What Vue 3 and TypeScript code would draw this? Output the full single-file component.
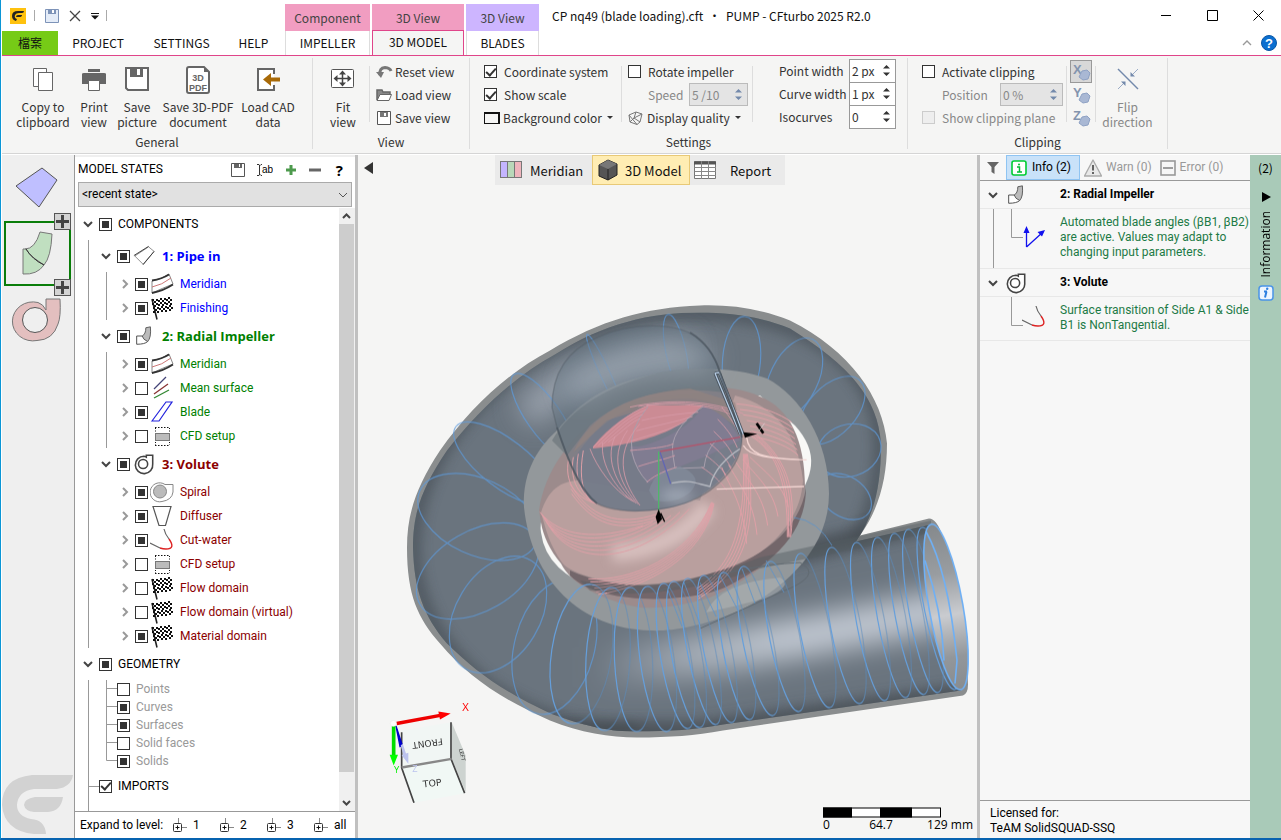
<script setup lang="ts">
import { ref } from 'vue'

type Check = 'on' | 'off' | 'part'
interface Leaf { label: string; icon: string; state: Check }
interface Part { label: string; icon: string; color: string; line: boolean; items: Leaf[] }

const flagCells = (): string => {
  let out = ''
  for (let r = 0; r < 7; r++) {
    for (let c = 0; c < 10; c++) {
      if ((r + c) % 2 === 0) {
        const y = 2 + r * 2 + (c < 3 ? 1 : c > 6 ? -1 : 0)
        out += `<rect x="${2 + c * 2 + (r > 3 ? 1 : 0)}" y="${y}" width="2" height="2" fill="#111"/>`
      }
    }
  }
  return out
}

const icons: Record<string, string> = {
  pipe: '<path d="M2 12L17 2L23 7L11 21Z" fill="#fff" stroke="#888"/><path d="M1 11.500L17 1.500M11 21.500L23 7" stroke="#333" fill="none"/>',
  meridian: '<path d="M2 9Q12 7 19 2L23 12Q13 16 2 21Z" fill="#fff" stroke="#888"/><path d="M2 8.500Q12 7 19 2.500M2 21Q13 19 23 12.500" stroke="#333" stroke-width="1.800" fill="none"/><path d="M2 15Q12 13 21 6" stroke="#c77" fill="none"/>',
  flag: '<path d="M2 2L22 1L23 14Q15 13 5 17Z" fill="#fff"/><path d="M2 3L7 23.500" stroke="#222" stroke-width="1.600"/>' + flagCells(),
  impeller: '<path d="M4 12H10L16 18Q13 21 4 21Z" fill="#fff" stroke="#444"/><path d="M14 3L19 2Q20 14 16 18Q11 16 10 12Q14 10 14 3Z" fill="#bbb" stroke="#555"/>',
  volute: '<path d="M14.500 4.500V2.500H21.500V12A9.500 9.500 0 1 1 12 3.500Q13.500 3.800 14.500 4.500Z" fill="#fff" stroke="#444" stroke-width="1.700"/><circle cx="11" cy="12" r="5" fill="#fff" stroke="#444" stroke-width="1.700"/>',
  mean: '<path d="M4 13L16 1" stroke="#447" stroke-width="1.300"/><path d="M4 18L18 8" stroke="#833" stroke-width="1.300"/><path d="M4 22L19 14" stroke="#383" stroke-width="1.300"/>',
  blade: '<path d="M2 21L16 2H22L9 21Z" fill="#fff" stroke="#22d" stroke-width="1.200"/>',
  cfd: '<rect x="5.500" y="9.500" width="14" height="7" fill="#bbb" stroke="#777"/><path d="M5 3.500H20M5 21.500H20" stroke="#111" stroke-dasharray="1.500 1.500"/><path d="M5.500 4V8M19.500 4V8M5.500 18V21M19.500 18V21" stroke="#111" stroke-dasharray="1 1.500"/>',
  spiral: '<path d="M15 4.500H23V12Q22 20 12 21.500A9.500 9.500 0 1 1 15 4.500Z" fill="#fff" stroke="#888"/><circle cx="10" cy="11.500" r="6.500" fill="#bbb" stroke="#888"/>',
  diffuser: '<path d="M3 2.500H21L15.500 21.500H9Z" fill="#fff" stroke="#555" stroke-width="1.200"/>',
  cutwater: '<path d="M14 1Q15 6 19 11M0 15L10 20" stroke="#666" fill="none" stroke-width="1.200"/><path d="M19 11Q26 21 16 21Q13 21 10 20" stroke="#d22" fill="none" stroke-width="1.400"/>',
  angles: '<path d="M4.500 21V5M4.500 21L21 6" stroke="#11e" fill="none" stroke-width="1.300"/><path d="M4.500 0L7.500 7H1.500ZM23 4L20 10.500L15.500 6Z" fill="#11e"/>'
}

const parts: Part[] = [
  { label: '1: Pipe in', icon: 'pipe', color: 'blue', line: true, items: [
    { label: 'Meridian', icon: 'meridian', state: 'part' },
    { label: 'Finishing', icon: 'flag', state: 'part' }] },
  { label: '2: Radial Impeller', icon: 'impeller', color: 'green', line: true, items: [
    { label: 'Meridian', icon: 'meridian', state: 'part' },
    { label: 'Mean surface', icon: 'mean', state: 'off' },
    { label: 'Blade', icon: 'blade', state: 'part' },
    { label: 'CFD setup', icon: 'cfd', state: 'off' }] },
  { label: '3: Volute', icon: 'volute', color: 'red', line: false, items: [
    { label: 'Spiral', icon: 'spiral', state: 'part' },
    { label: 'Diffuser', icon: 'diffuser', state: 'part' },
    { label: 'Cut-water', icon: 'cutwater', state: 'part' },
    { label: 'CFD setup', icon: 'cfd', state: 'off' },
    { label: 'Flow domain', icon: 'flag', state: 'off' },
    { label: 'Flow domain (virtual)', icon: 'flag', state: 'off' },
    { label: 'Material domain', icon: 'flag', state: 'part' }] }
]

const geometry: { label: string; state: Check }[] = [
  { label: 'Points', state: 'off' },
  { label: 'Curves', state: 'part' },
  { label: 'Surfaces', state: 'part' },
  { label: 'Solid faces', state: 'off' },
  { label: 'Solids', state: 'part' }
]

const messages = [
  { title: '2: Radial Impeller', icon: 'impeller', mark: 'angles', tall: true,
    text: 'Automated blade angles (βB1, βB2)\nare active. Values may adapt to\nchanging input parameters.' },
  { title: '3: Volute', icon: 'volute', mark: 'cutwater', tall: false,
    text: 'Surface transition of Side A1 & Side\nB1 is NonTangential.' }
]

const widths = [
  { label: 'Point width', value: '2 px', id: 'pw' },
  { label: 'Curve width', value: '1 px', id: 'cw' },
  { label: 'Isocurves', value: '0', id: 'iso' }
]
const axes = ['X', 'Y', 'Z']
const levels = ['1', '2', '3', 'all']
const stateName = ref('<recent state>')

/* Section rings: the two ends of the major axis and the minor radius */
const toRing = (r: number[]) => {
  const dx = r[2] - r[0]
  const dy = r[3] - r[1]
  return {
    cx: (r[0] + r[2]) / 2, cy: (r[1] + r[3]) / 2,
    rx: r[4], ry: Math.hypot(dx, dy) / 2,
    rot: -Math.atan2(dx, dy) * 180 / Math.PI
  }
}
const spiralRings = [
  [572, 580, 537, 713, 40], [531, 560, 465, 668, 42], [535, 537, 420, 604, 40],
  [420, 490, 536, 543, 38], [456, 426, 552, 500, 24], [514, 374, 573, 458, 17],
  [587, 334, 624, 414, 5], [668, 314, 684, 390, 10], [745, 316, 738, 404, 19],
  [813, 339, 775, 417, 24], [860, 380, 804, 440, 24], [880, 440, 818, 460, 26],
  [821, 480, 869, 512, 20]
].map(toRing)
const pipeRings = [
  [922, 527, 955, 689, 14], [908, 529, 938, 692, 14], [894, 533, 924, 694, 14],
  [877, 537, 906, 697, 14], [856, 542, 885, 700, 14], [831, 547, 860, 703, 15],
  [800, 553, 830, 707, 15], [770, 561, 799, 711, 15], [743, 566, 773, 715, 15],
  [723, 572, 750, 719, 14], [703, 575, 732, 722, 14], [687, 578, 716, 724, 14],
  [673, 581, 700, 727, 15], [663, 583, 688, 728, 15], [647, 586, 667, 731, 17],
  [630, 587, 637, 731, 19], [612, 587, 604, 730, 22], [592, 584, 571, 723, 30]
].map(toRing)

/* n curves interpolated between two cubic Béziers */
const fan = (a: number[], b: number[], n: number): string => {
  let d = ''
  for (let i = 0; i < n; i++) {
    const p = a.map((v, k) => Math.round(v + (b[k] - v) * i / (n - 1)))
    d += `M${p[0]} ${p[1]}C${p.slice(2).join(' ')}`
  }
  return d
}
const outerLines = [
  fan([30, 425, 90, 500, 200, 510, 340, 465], [50, 455, 130, 600, 330, 580, 478, 415], 6),
  fan([175, 625, 300, 635, 480, 560, 545, 395], [205, 672, 350, 650, 520, 560, 552, 400], 6),
  fan([500, 655, 580, 600, 650, 520, 640, 250], [505, 685, 620, 610, 690, 520, 652, 250], 5),
  fan([620, 100, 690, 105, 750, 130, 785, 155], [680, 200, 730, 210, 780, 230, 805, 255], 7),
  fan([650, 190, 730, 230, 775, 320, 772, 500], [665, 180, 770, 260, 800, 350, 782, 500], 4),
  fan([115, 270, 105, 330, 130, 380, 200, 400], [160, 240, 150, 300, 150, 350, 180, 390], 4),
  fan([120, 340, 180, 440, 260, 470, 385, 430], [125, 370, 190, 460, 260, 490, 385, 445], 3),
  fan([575, 290, 600, 350, 640, 400, 650, 520], [660, 260, 700, 300, 760, 340, 775, 410], 5)
].join('')
const innerLines = [
  fan([180, 235, 200, 290, 250, 360, 305, 390], [330, 160, 240, 260, 290, 350, 330, 405], 5),
  fan([190, 230, 250, 170, 290, 130, 355, 105], [235, 215, 280, 180, 310, 150, 330, 145], 4),
  fan([335, 150, 400, 135, 450, 130, 505, 125], [302, 212, 370, 190, 420, 180, 470, 150], 3),
  fan([300, 240, 360, 235, 410, 230, 430, 220], [350, 335, 380, 310, 410, 300, 440, 290], 3),
  fan([575, 110, 600, 140, 615, 160, 630, 200], [515, 290, 545, 310, 570, 330, 590, 360], 6),
  fan([300, 110, 430, 80, 560, 95, 640, 130], [350, 105, 450, 95, 560, 105, 620, 140], 3)
].join('')
</script>

<template>
  <div class="app">
    <header class="top">
      <div class="left">
        <div class="quick">
          <svg class="logo" width="16" height="16" viewBox="0 0 16 16"><rect width="16" height="16" fill="#ffc20e" /><path d="M14 3H8Q2 3 2 8Q2 12 6 13L7 11Q4 10 5 7Q6 5 9 5H12Q14 5 14 3ZM12 7H8Q6 7 6 9H9Q12 9 12 7Z" fill="#222" /></svg>
          <i class="bar"></i>
          <button aria-label="Save"><svg width="14" height="14" viewBox="0 0 14 14"><path d="M.5.5H13.500V13.500H.5Z" fill="#e4ecf8" stroke="#7d93b8" /><path d="M3 1H11V5H3Z" fill="#7d93b8" /><path d="M7 1H9V4H7Z" fill="#fff" /></svg></button>
          <button aria-label="Undo"><svg width="12" height="12" viewBox="0 0 12 12"><path d="M1 1L11 11M11 1L1 11" stroke="#444" stroke-width="1.300" /></svg></button>
          <button aria-label="Customize"><svg width="8" height="8" viewBox="0 0 8 8"><path d="M0 1.500H8" stroke="#111" /><path d="M0 3.500H8L4 7.500Z" fill="#111" /></svg></button>
          <i class="bar"></i>
        </div>
        <nav class="tabs">
          <button class="file">檔案</button>
          <button class="t1">PROJECT</button>
          <button class="t2">SETTINGS</button>
          <button class="t3">HELP</button>
        </nav>
      </div>
      <div class="ctx c1"><span>Component</span><button>IMPELLER</button></div>
      <div class="ctx c2"><span>3D View</span><button>3D MODEL</button></div>
      <div class="ctx c3"><span>3D View</span><button>BLADES</button></div>
      <div class="right">
        <div class="caption">
          <h1>CP nq49 (blade loading).cft&nbsp; • &nbsp;PUMP - CFturbo 2025 R2.0</h1>
          <div class="win">
            <button aria-label="Minimize"><svg width="11" height="11"><path d="M0 5.500H10" stroke="#000" /></svg></button>
            <button aria-label="Maximize"><svg width="11" height="11"><path d="M.5.5H10.500V10.500H.5Z" stroke="#000" fill="none" /></svg></button>
            <button aria-label="Close"><svg width="11" height="11"><path d="M.5.5L10.500 10.500M10.500.5L.5 10.500" stroke="#000" /></svg></button>
          </div>
        </div>
        <div class="help">
          <button aria-label="Collapse ribbon"><svg width="10" height="6"><path d="M1 5L5 1L9 5" stroke="#999" fill="none" stroke-width="1.400" /></svg></button>
          <button aria-label="Help"><svg width="16" height="16"><circle cx="8" cy="8" r="7.500" fill="#0b6fd0" stroke="#0a57a5" /><text x="8" y="13" text-anchor="middle" class="q">?</text></svg></button>
        </div>
      </div>
    </header>

    <section class="ribbon">
      <div class="group general">
        <div class="content">
          <button class="big b1"><svg width="26" height="28"><path d="M3.500 2.500H16.500V20.500H3.500Z" fill="#fff" stroke="#666" /><path d="M8.500 6.500H22.500V24.500H8.500Z" fill="#fff" stroke="#666" /></svg>Copy to<br>clipboard</button>
          <button class="big b2"><svg width="26" height="28"><path d="M7 3H19V6H7ZM1 8Q1 7 3 7H23Q25 7 25 8V18H1Z" fill="#666" /><path d="M7.500 14.500H18.500V24.500H7.500Z" fill="#fff" stroke="#666" /></svg>Print<br>view</button>
          <button class="big b3"><svg width="26" height="28"><path d="M2 2H24V24H4L2 22Z" fill="#fff" stroke="#666" stroke-width="2" /><path d="M6 2H19V11H6Z" fill="#666" /><path d="M13 3H16V9H13Z" fill="#fff" /></svg>Save<br>picture</button>
          <button class="big b4"><svg width="26" height="28"><path d="M2 3Q2 1 4 1H19L24 6V25Q24 27 22 27H4Q2 27 2 25Z" fill="#fff" stroke="#666" stroke-width="2" /><path d="M19 1V6H24Z" fill="#666" /><text x="13" y="15" text-anchor="middle" class="pdf">3D</text><text x="13" y="25" text-anchor="middle" class="pdf">PDF</text></svg>Save 3D-PDF<br>document</button>
          <button class="big b5"><svg width="26" height="28"><path d="M19 8V3H3V24H19V19" fill="#fff" stroke="#666" stroke-width="2" /><path d="M8 13.500L16 7V11.500H25V15.500H16V20Z" fill="#a86a08" /></svg>Load CAD<br>data</button>
        </div>
        <div class="caption-row">General</div>
      </div>
      <div class="group view">
        <div class="content">
          <button class="big fit"><svg width="26" height="28"><rect x="1.500" y="3.500" width="22" height="18" rx="1" fill="#fff" stroke="#555" /><path d="M12.500 6V19M5 12.500H20" stroke="#444" stroke-width="1.500" /><path d="M12.500 4.500L16 8.500H9ZM12.500 20.500L16 16.500H9ZM3.500 12.500L7.500 9V16ZM21.500 12.500L17.500 9V16Z" fill="#444" /></svg>Fit<br>view</button>
          <i class="sep"></i>
          <div class="rows vlist">
            <button><svg width="17" height="14"><path d="M4 10Q3 3 9 2.500Q14 3 15 6" stroke="#777" stroke-width="3" fill="none" /><path d="M0 7H8L5 13Z" fill="#777" /></svg>Reset view</button>
            <button><svg width="17" height="14"><path d="M1 12V2H6L7 4H14V6" stroke="#666" stroke-width="1.500" fill="#888" /><path d="M1 12.500L4 6.500H15.500L13 12.500Z" fill="#fff" stroke="#666" /></svg>Load view</button>
            <button><svg width="17" height="14"><path d="M1.500.5H14.500V13.500H1.500Z" fill="#fff" stroke="#555" /><path d="M4 1H12V6H4Z" fill="#777" /><path d="M8 2H10V5H8Z" fill="#fff" /></svg>Save view</button>
          </div>
        </div>
        <div class="caption-row">View</div>
      </div>
      <div class="group settings">
        <div class="content">
          <div class="rows s1">
            <label><input type="checkbox" checked>Coordinate system</label>
            <label><input type="checkbox" checked>Show scale</label>
            <button><i class="swatch"></i>Background color<i class="drop"></i></button>
          </div>
          <i class="sep"></i>
          <div class="rows s2">
            <label><input type="checkbox">Rotate impeller</label>
            <div class="field off"><label for="speed">Speed</label><span class="spin"><input id="speed" value="5 /10" disabled><svg width="7" height="13"><path d="M3.500 1L7 4.500H0ZM3.500 12L7 8.500H0Z" /></svg></span></div>
            <button><svg width="15" height="14" class="mesh"><path d="M1 4L8 1L14 3L12 11L9 13.500L2 11ZM1 4L9 13.500M8 1L6 7L12 11M14 3L6 7L2 11" fill="none" stroke="#777" /></svg>Display quality<i class="drop"></i></button>
          </div>
          <i class="sep"></i>
          <div class="rows s3">
            <div v-for="w in widths" :key="w.id" class="field"><label :for="w.id">{{ w.label }}</label><span class="spin"><input :id="w.id" :value="w.value"><svg width="7" height="13"><path d="M3.500 1L7 4.500H0ZM3.500 12L7 8.500H0Z" /></svg></span></div>
          </div>
        </div>
        <div class="caption-row">Settings</div>
      </div>
      <div class="group clipping">
        <div class="content">
          <div class="rows k1">
            <label><input type="checkbox">Activate clipping</label>
            <div class="field off"><label for="pos">Position</label><span class="spin"><input id="pos" value="0 %" disabled><svg width="7" height="13"><path d="M3.500 1L7 4.500H0ZM3.500 12L7 8.500H0Z" /></svg></span></div>
            <label class="off"><input type="checkbox" disabled>Show clipping plane</label>
          </div>
          <i class="sep"></i>
          <div class="rows axes">
            <button v-for="(a, i) in axes" :key="a" :class="{ on: i === 0 }" :aria-label="a + ' axis'"><svg width="20" height="20"><text x="2" y="12">{{ a }}</text><path d="M11 9L16 8L19 11L17 17L12 18L8 15Z" fill="#a9b8d4" stroke="#8fa2c4" /></svg></button>
          </div>
          <i class="sep"></i>
          <button class="big flip off"><svg width="26" height="28"><path d="M3 3L23 23" stroke="#7389ab" stroke-width="1.500" /><path d="M3 23L10 16M23 3L16 10" stroke="#9aabc6" /><path d="M10.500 15.500V20L6 15.500ZM15.500 10.500V6L20 10.500Z" fill="#7389ab" /></svg>Flip<br>direction</button>
        </div>
        <div class="caption-row">Clipping</div>
      </div>
    </section>

    <main class="work">
      <aside class="rail">
        <button class="comp" aria-label="Pipe in"><svg width="60" height="50"><path d="M9 23L35 5L50 17L32 44Z" fill="#bfbfff" stroke="#555" /></svg></button>
        <div class="selected">
          <button class="comp" aria-label="Radial Impeller"><svg width="60" height="60"><path d="M31 9L43 11Q42 34 35 42Q23 35 16 26Q26 26 31 9Z" fill="#c0dfc0" stroke="#777" /><path d="M14 26H17Q23 36 35 42Q28 52 14 51Z" fill="#c0dfc0" stroke="#777" /><path d="M17 26Q23 36 35 42" fill="none" stroke="#333" /></svg></button>
          <button class="plus p1" aria-label="Add before"></button>
          <button class="plus p2" aria-label="Add after"></button>
        </div>
        <button class="comp vol" aria-label="Volute"><svg width="60" height="50"><path d="M39 17V6H53Q54 24 51 31Q46 47 30 47.500A20.500 19.500 0 1 1 31 9.500Q36 11 39 17Z" fill="#e3bfbf" stroke="#777" /><circle cx="28" cy="27" r="12.500" fill="#efefef" stroke="#555" /></svg></button>
        <svg class="mark" width="72" height="60"><path d="M71 0H30Q0 3 0 30Q2 56 32 59H44Q43 45 29 44Q15 41 15 30Q16 16 32 14H55Q69 12 71 0ZM61 22H33Q22 24 22 30Q23 36 32 37H46Q59 36 61 22Z" fill="#d2d2d2" /></svg>
      </aside>

      <aside class="panel">
        <div class="phead">
          <h2>MODEL STATES</h2>
          <button aria-label="Save state"><svg width="14" height="14"><path d="M.5.5H13.500V13.500H.5Z" fill="#fff" stroke="#555" /><path d="M3 1H11V5H3Z" fill="#666" /><path d="M8 1H9V4H8Z" fill="#fff" /></svg></button>
          <button aria-label="Rename state"><svg width="16" height="14"><path d="M0 1.500H2L3 2.500L4 1.500H5M0 12.500H2L3 11.500L4 12.500H5M2.500 2V12" stroke="#333" fill="none" /><text x="5" y="10" class="ab">ab</text></svg></button>
          <button aria-label="Add state"><svg width="12" height="12"><path d="M6 1V11M1 6H11" stroke="#4d9a4d" stroke-width="3" /></svg></button>
          <button aria-label="Remove state"><svg width="12" height="12"><path d="M0 6H12" stroke="#666" stroke-width="3" /></svg></button>
          <button class="qm">?</button>
        </div>
        <select v-model="stateName" aria-label="Model state"><option>&lt;recent state&gt;</option></select>
        <div class="treewrap">
          <div class="tree">
            <div class="row r0">
              <svg class="chev" width="12" height="12"><path d="M2 4L6 8L10 4" /></svg>
              <label><input type="checkbox" :indeterminate="true">COMPONENTS</label>
            </div>
            <ul class="l1">
              <li v-for="p in parts" :key="p.label" :class="p.color">
                <div class="row r1">
                  <svg class="chev" width="12" height="12"><path d="M2 4L6 8L10 4" /></svg>
                  <label><input type="checkbox" :indeterminate="true"><svg width="22" height="24" viewBox="0 0 24 24" class="ic" v-html="icons[p.icon]"></svg>{{ p.label }}</label>
                </div>
                <ul class="l2" :class="{ noline: !p.line }">
                  <li v-for="(it, k) in p.items" :key="k" class="row r2">
                    <svg class="chev dim" width="12" height="12"><path d="M4 2L8 6L4 10" /></svg>
                    <label><input type="checkbox" :indeterminate="it.state === 'part'"><svg width="24" height="24" viewBox="0 0 24 24" class="ic" v-html="icons[it.icon]"></svg>{{ it.label }}</label>
                  </li>
                </ul>
              </li>
            </ul>
            <div class="row r0">
              <svg class="chev" width="12" height="12"><path d="M2 4L6 8L10 4" /></svg>
              <label><input type="checkbox" :indeterminate="true">GEOMETRY</label>
            </div>
            <div class="l1 rest">
              <ul class="geo">
                <li v-for="(g, i) in geometry" :key="g.label">
                  <svg width="11" height="18"><path :d="i === geometry.length - 1 ? 'M.5 0V8.500H11' : 'M.5 0V18M.5 8.500H11'" fill="none" stroke="#999" /></svg>
                  <label><input type="checkbox" :indeterminate="g.state === 'part'">{{ g.label }}</label>
                </li>
              </ul>
              <div class="row imports"><i class="tick"></i><label><input type="checkbox" checked>IMPORTS</label></div>
            </div>
          </div>
          <div class="scroll">
            <svg width="15" height="16"><path d="M4 10L7.500 6.500L11 10" /></svg>
            <i></i>
            <svg width="15" height="16"><path d="M4 6L7.500 9.500L11 6" /></svg>
          </div>
        </div>
        <div class="expand">
          <span>Expand to level:</span>
          <button v-for="l in levels" :key="l"><svg width="15" height="15"><path d="M6.500 0V5M10 9.500H15" stroke="#888" /><rect x="1.500" y="5.500" width="8" height="8" rx="1" fill="#fff" stroke="#333" /><path d="M3.500 9.500H7.500M5.500 7.500V11.500" stroke="#111" /></svg>{{ l }}</button>
        </div>
      </aside>
      <i class="split"></i>

      <section class="viewport">
        <svg class="scene" viewBox="358 155 619 682" preserveAspectRatio="xMidYMid meet">
          <defs>
            <filter id="soft" filterUnits="userSpaceOnUse" x="380" y="280" width="620" height="500"><feGaussianBlur stdDeviation="14" /></filter>
            <filter id="fine" filterUnits="userSpaceOnUse" x="380" y="280" width="620" height="500"><feGaussianBlur stdDeviation="6" /></filter>
            <linearGradient id="mouth" x1="0" y1="0" x2="0" y2="1"><stop offset="0" stop-color="#85898c" /><stop offset=".3" stop-color="#999da1" /><stop offset=".55" stop-color="#caccd0" /><stop offset=".8" stop-color="#93979b" /><stop offset="1" stop-color="#888c8f" /></linearGradient>
            <linearGradient id="glow" gradientUnits="userSpaceOnUse" x1="590" y1="0" x2="780" y2="0"><stop offset="0" stop-color="#c2c9d3" stop-opacity="0" /><stop offset=".55" stop-color="#c2c9d3" stop-opacity=".7" /><stop offset="1" stop-color="#c2c9d3" /></linearGradient>
            <linearGradient id="wire" x1="0" y1="0" x2="1" y2="0"><stop offset="0" stop-color="#659fdc" /><stop offset=".45" stop-color="#659fdc" /><stop offset=".75" stop-color="#5a8cbf" stop-opacity=".55" /><stop offset="1" stop-color="#5a8cbf" stop-opacity=".5" /></linearGradient>
            <clipPath id="body"><path d="M700 312C650 312 604 323 555 354C515 376 480 408 447 450C420 490 413 515 413 547C414 590 424 616 447 643C475 670 500 690 553 714C590 727 610 731 637 731C670 731 695 729 723 724L961 690C945 665 928 600 925 560C923 535 925 524 931 524L856 541C873 516 881 490 881 443C878 398 850 365 790 328C760 316 730 312 700 312Z" /></clipPath>
          </defs>
          <path d="M700 305C645 307 600 320 550 350C505 374 470 408 440 450C415 488 407 515 407 547C407 595 418 618 440 643C468 676 500 698 550 720C580 732 610 737 637 737C670 737 695 735 723 730L963 695Q968 693 968 684Q966 600 943 537Q937 518 929 518L860 535C878 510 887 480 887 443C883 397 850 350 790 320C760 308 730 304 700 305Z" fill="#8a8d8e" />
          <g clip-path="url(#body)">
            <rect x="400" y="300" width="580" height="445" fill="#6a747e" />
            <path d="M637 731C500 731 413 640 413 547C413 440 530 312 700 312C810 312 881 370 881 443Q881 500 856 541" fill="none" stroke="#4a5158" stroke-width="16" filter="url(#fine)" opacity=".7" />
            <path d="M560 732L700 731L965 694M640 590L940 518" fill="none" stroke="#454b51" stroke-width="22" filter="url(#fine)" opacity=".75" />
            <path d="M525 415Q590 355 690 350" fill="none" stroke="#b6bdc9" stroke-width="26" filter="url(#soft)" opacity=".75" />
            <path d="M590 668Q720 655 990 600" fill="none" stroke="url(#glow)" stroke-width="40" filter="url(#soft)" />
          </g>
          <g fill="none" stroke="#5e9bdc" stroke-width="1.200" opacity=".75">
            <ellipse v-for="(r, i) in spiralRings" :key="i" :cx="r.cx" :cy="r.cy" :rx="r.rx" :ry="r.ry" :transform="`rotate(${r.rot} ${r.cx} ${r.cy})`" />
          </g>

          <path d="M524 507C522 470 540 445 557 430C580 400 610 384 637 378C680 366 730 365 767 378C800 395 829 440 829 493C829 545 790 585 740 610C700 627 670 631 650 630C580 628 532 580 524 507Z" fill="#93989b" />
          <path d="M541 532Q538 515 555 495L620 420L760 395L795 425Q813 445 811 465Q808 500 740 560L600 590Q546 572 541 532Z" fill="#f8f8f6" />
          <path d="M539 510C545 470 570 435 607 412C650 385 720 378 760 396C790 408 805 440 805 487C804 540 760 575 710 597C680 606 660 608 640 607C600 600 570 582 561 563C550 550 543 535 541 522Z" fill="#9c8b8c" />
          <path d="M541 512C548 490 560 480 580 480L700 500L735 395Q795 410 803 480C800 540 730 585 653 587C610 583 572 575 562 562C550 545 546 530 541 512Z" fill="#b99f9e" />
          <path d="M612 552C645 552 685 538 708 505" fill="none" stroke="#ecd6d4" stroke-width="18" filter="url(#fine)" opacity=".6" />
          <path d="M570 575C600 606 690 602 725 587C790 555 806 520 806 487C800 530 760 560 710 573C660 590 610 588 570 570Z" fill="#6c5f64" opacity=".85" />
          <path d="M552 440Q580 392 660 372Q720 362 722 376L726 392Q640 380 590 425L567 455Z" fill="#727a80" opacity=".8" />

          <path d="M552 407C552 375 566 350 597 337C630 322 680 320 700 340C712 350 717 362 720 372L742 437C742 458 730 475 710 490C680 512 620 516 597 503C580 490 568 460 557 427Z" fill="#62707e" opacity=".45" />
          <path d="M572 392Q620 355 712 358" fill="none" stroke="#b4bdc8" stroke-width="22" filter="url(#soft)" opacity=".6" />
          <path d="M573 460C600 415 640 398 690 398C730 402 742 420 742 440C738 465 715 490 685 503C650 515 610 512 592 500Q575 485 573 460Z" fill="#747b8a" opacity=".9" />
          <path d="M573 452Q600 395 690 388L735 402L742 432Q700 388 607 420Z" fill="#96837f" opacity=".6" />
          <path d="M593 446C610 425 630 412 648 405L703 405C688 418 672 440 593 448Z" fill="#cb8b94" />
          <path d="M637 446C650 445 690 430 703 405Q730 415 740 440L708 455L675 468L648 483Q630 460 630 446Z" fill="#807c91" />
          <path d="M648 406Q628 430 632 452Q636 470 648 482M703 406Q668 430 673 455L675 468L704 467Q706 450 716 440" fill="none" stroke="#a8a0ad" />
          <path d="M649 490Q655 468 680 466Q705 476 690 492Q675 504 655 500Z" fill="#838d9b" opacity=".7" />
          <ellipse cx="677" cy="495" rx="16" ry="6" fill="#b0b8c4" filter="url(#fine)" opacity=".7" />
          <g transform="translate(530 370) scale(.3333)" fill="none">
            <path :d="outerLines" stroke="#dfa0a7" stroke-width="3" />
            <path :d="innerLines" stroke="#d79ba8" stroke-width="3" opacity=".85" />
            <path d="M425 338C480 325 500 340 540 348C550 300 590 260 630 235" stroke="#b5b8c0" stroke-width="4" />
            <path d="M390 243L630 200" stroke="#b2556c" stroke-width="4" />
            <path d="M390 245L422 340" stroke="#6066b4" stroke-width="4" />
            <path d="M386 243V425" stroke="#50b56a" stroke-width="4" />
            <path d="M555 8L632 195M568 6L640 192M555 8L568 6" stroke="#3f4953" stroke-width="9" />
            <path d="M555 8L632 195M568 6L640 192M555 8L568 6" stroke="#bad0e8" stroke-width="4" />
            <path d="M650 200C655 250 690 265 830 268M640 225C660 260 720 262 822 268M560 356L822 348" stroke="#f2d5d2" stroke-width="4" />
            <path d="M640 185L682 190L645 202Z" fill="#000" />
            <path d="M680 158L700 188" stroke="#000" stroke-width="8" />
            <path d="M688 180L704 158" stroke="#ddd" stroke-width="2" />
            <path d="M386 422L394 445L384 457L379 440ZM392 428L404 454" fill="#000" stroke="#000" stroke-width="4" />
          </g>
          <path d="M552 407C552 375 566 350 597 337C630 322 680 320 700 340C712 350 717 362 720 372L742 437C742 458 730 475 710 490C680 512 620 516 597 503C580 490 568 460 557 427Z" fill="none" stroke="#4c565f" stroke-width="1.500" opacity=".35" />
          <path d="M557 427C568 460 580 490 597 503M690 332Q712 345 720 372L742 437" fill="none" stroke="#4c565f" stroke-width="2" opacity=".7" />
          <path d="M580 580Q660 596 760 557L931 520L931 532L760 568Q660 602 590 590Z" fill="#555d62" opacity=".45" />
          <path d="M660 590Q740 565 800 562Q825 575 780 592L700 628" fill="none" stroke="#616a71" />
          <path d="M706 612Q720 582 780 577Q795 585 765 598Q735 606 706 612Z" fill="#b4b7b9" opacity=".5" />
          <g fill="none" stroke="url(#wire)" stroke-width="1.200">
            <ellipse v-for="(r, i) in pipeRings" :key="i" :cx="r.cx" :cy="r.cy" :rx="r.rx" :ry="r.ry" :transform="`rotate(${r.rot} ${r.cx} ${r.cy})`" />
          </g>
          <path d="M794 517Q818 520 832 545M668 590L682 626M684 582L700 624M700 582L716 616M720 575L738 610M742 568L755 603M766 560L784 592" fill="none" stroke="#5c93cc" opacity=".8" />
          <ellipse cx="946" cy="606.500" rx="17" ry="84" transform="rotate(-10 946 606.500)" fill="url(#mouth)" />
          <g fill="none" stroke="#6fb0f5" stroke-width="1.600">
            <ellipse cx="946" cy="606.500" rx="17" ry="84" transform="rotate(-10 946 606.500)" />
            <path d="M926 531Q948 570 957 660L955 683M925 560Q942 610 944 660" />
          </g>

          <g transform="translate(370 690) scale(.3333)">
            <path d="M95 120L245 95V205L95 232Z" fill="#f1f6f4" /><path d="M245 95L287 195V305L245 205Z" fill="#cdd3d0" /><path d="M95 234L245 205L285 308L132 337Z" fill="#f1f8f5" />
            <path d="M95 125V232L132 337M243 95V205L284 308" stroke="#444" stroke-width="5" fill="none" /><path d="M95 231L245 205" stroke="#888" stroke-width="7" />
            <path d="M78 106L97 165L90 168Z" fill="#0000cc" stroke="#00c" stroke-width="4" /><path d="M92 165L100 192L95 194L115 220V187L108 189L98 160Z" fill="#bcc3ee" />
            <path d="M80 99L215 74" stroke="#e00" stroke-width="10" /><path d="M205 63L242 69L210 87Z" fill="#f00" />
            <path d="M71 105V200" stroke="#0d0" stroke-width="11" /><path d="M59 193H84L71 225Z" fill="#0f0" /><circle cx="70" cy="99" r="9" fill="#fff" stroke="#ddd" />
            <text class="face" transform="translate(217 143) rotate(172)" font-size="27">FRONT</text>
            <text class="face" transform="translate(160 291) rotate(-7)" font-size="28">TOP</text>
            <text class="face" transform="translate(266 176) rotate(75)" font-size="16">LEFT</text>
            <text x="277" y="62" font-size="34" fill="#f00">X</text><text x="72" y="249" font-size="28" fill="#0e0">Y</text><text x="127" y="245" font-size="28" fill="#bcc3ee">Z</text>
          </g>
          <rect x="823.500" y="807.500" width="117" height="9" fill="#fff" stroke="#000" /><path d="M823 807H852V817H823ZM880 807H912V817H880Z" />
          <g class="scale"><text x="823" y="828">0</text><text x="881" y="828" text-anchor="middle">64.7</text><text x="973" y="828" text-anchor="end">129 mm</text></g>
        </svg>
        <button class="collapse" aria-label="Collapse panel"></button>
        <nav class="modes">
          <button class="m1"><svg width="22" height="18"><rect x=".5" y=".5" width="7" height="16" fill="#c4b5ff" stroke="#777" /><rect x="7.500" y=".5" width="7" height="16" fill="#b9d8b9" stroke="#777" /><rect x="14.500" y=".5" width="7" height="16" fill="#efb5bd" stroke="#777" /></svg>Meridian</button>
          <button class="m2"><svg width="22" height="22"><path d="M2 6L11 1L20 5V16L11 21L2 17Z" fill="#555" stroke="#222" /><path d="M2 6L11 10L20 5L11 1Z" fill="#777" /><path d="M11 10V21" stroke="#222" /></svg>3D Model</button>
          <button class="m3"><svg width="22" height="18"><path d="M.5.5H21.500V17.500H.5Z" fill="#fff" stroke="#777" /><path d="M0 2H22" stroke="#555" stroke-width="3" /><path d="M.5 6.500H22M.5 10.500H22M.5 14.500H22M7.500 0V18M14.500 0V18" stroke="#888" fill="none" /></svg>Report</button>
        </nav>
      </section>
      <i class="split"></i>

      <aside class="info">
        <div class="filters">
          <svg width="12" height="13"><path d="M0 1H12L7.500 6V13L4.500 11V6Z" fill="#666" /></svg>
          <button class="active"><svg width="16" height="16"><rect x="1" y="1" width="14" height="14" rx="2" fill="#fff" stroke="#0c3" stroke-width="1.600" /><path d="M6 7H8.500V12M6 12H11" stroke="#0b3" stroke-width="1.500" fill="none" /><circle cx="8" cy="4.500" r="1" fill="#0b3" /></svg>Info (2)</button>
          <button class="warn"><svg width="18" height="18"><path d="M9 1L17.500 17H.5Z" fill="#e8e8e8" stroke="#aaa" stroke-width="1.300" stroke-linejoin="round" /><path d="M9 6V11.500M9 13V15" stroke="#555" stroke-width="1.800" /></svg>Warn (0)</button>
          <button><svg width="16" height="16"><rect x="1" y="1" width="14" height="14" fill="none" stroke="#999" stroke-width="1.600" /><path d="M3 8H13" stroke="#888" stroke-width="1.600" /></svg>Error (0)</button>
        </div>
        <article v-for="m in messages" :key="m.title">
          <h3><svg class="chev" width="12" height="12"><path d="M2 4L6 8L10 4" /></svg><svg class="hic" width="22" height="22" viewBox="0 0 24 24" v-html="icons[m.icon]"></svg>{{ m.title }}</h3>
          <div class="msg" :class="{ tall: m.tall }">
            <svg width="12" height="30"><path d="M.5 0V28.500H12" fill="none" stroke="#999" /></svg>
            <svg class="mic" width="24" height="24" viewBox="0 0 24 24" v-html="icons[m.mark]"></svg>
            <p>{{ m.text }}</p>
          </div>
        </article>
        <footer>Licensed for:<br>TeAM SolidSQUAD-SSQ</footer>
      </aside>
      <aside class="strip">
        <span>(2)</span>
        <svg width="10" height="10"><path d="M1 0L10 5L1 10Z" /></svg>
        <span class="vert">Information</span>
        <svg width="16" height="16"><rect x="1" y="1" width="14" height="14" rx="3" fill="#eef5ff" stroke="#4a94e8" stroke-width="1.500" /><path d="M8.500 6.500L7 12.500M6 6.500H9" stroke="#2d7fe0" stroke-width="2" /><circle cx="9.200" cy="3.800" r="1.200" fill="#2d7fe0" /></svg>
      </aside>
    </main>
  </div>
</template>

<style>
body { margin: 0; }
</style>

<style scoped>
* { box-sizing: border-box; }
.app { height: 100vh; display: flex; flex-direction: column; border-left: 1px solid #0b96d6; border-bottom: 2px solid #0763b0; background: #fff; color: #111; font: 12px/15px "Noto Sans CJK TC", "Noto Sans", sans-serif; padding-left: 1px; overflow: hidden; }
button { font: inherit; color: inherit; background: none; border: 0; padding: 0; margin: 0; display: flex; align-items: center; }
svg { display: block; flex: none; }
i { display: block; flex: none; }
ul { list-style: none; margin: 0; padding: 0; }
h1, h2, h3, p { margin: 0; font: inherit; }
label { display: flex; align-items: center; white-space: nowrap; }
input[type="checkbox"] { appearance: none; width: 13px; height: 13px; border: 1px solid #333; margin: 0; background: #fff; flex: none; display: grid; place-items: center; }
input[type="checkbox"]:indeterminate::before { content: ""; width: 7px; height: 7px; background: #333; }
input[type="checkbox"]:checked::before { content: ""; width: 8px; height: 4px; border: solid #333; border-width: 0 0 2px 2px; transform: translateY(-1px) rotate(-48deg); }
input[type="checkbox"]:disabled { border-color: #ccc; background: #eee; }

.top { display: flex; height: 55px; flex: none; }
.left { width: 283px; display: flex; flex-direction: column; }
.quick { height: 31px; display: flex; align-items: center; gap: 10px; padding-left: 8px; }
.quick .bar { width: 1px; height: 11px; background: #aaa; margin: 0 -3px; }
.quick .logo + .bar { margin-left: -2px; margin-right: 0; }
.tabs { display: flex; height: 24px; }
.tabs button { justify-content: center; padding-bottom: 2px; }
.file { width: 56px; background: #76cb16; }
.tabs .t1 { width: 80px; }
.tabs .t2 { width: 87px; }
.tabs .t3 { width: 57px; }
.ctx { display: flex; flex-direction: column; padding-top: 4px; margin-right: 2px; }
.ctx span { height: 27px; display: flex; align-items: center; justify-content: center; color: #444; background: #f19dc1; }
.ctx button { height: 24px; justify-content: center; border-left: 1px solid #ddd; border-right: 1px solid #ddd; padding-bottom: 2px; }
.c1 { width: 85px; }
.c2 { width: 92px; }
.c2 button { height: 25px; background: #f5f5f4; border: solid #e0458a; border-width: 1px 1px 0; position: relative; padding-bottom: 3px; }
.c3 { width: 73px; }
.c3 span { background: #cdb5ff; }
.right { flex: 1; display: flex; flex-direction: column; }
.caption { display: flex; justify-content: space-between; height: 31px; align-items: center; padding-left: 11px; white-space: nowrap; }
.win { display: flex; }
.win button { width: 46px; height: 31px; justify-content: center; }
.help { display: flex; justify-content: flex-end; align-items: center; height: 24px; gap: 9px; padding-right: 4px; }
.q { font: bold 13px "Liberation Sans", sans-serif; fill: #fff; }

.ribbon { flex: none; display: flex; height: 99px; background: #f5f5f4; border-top: 1px solid #e0458a; border-bottom: 1px solid #d5d5d5; margin-bottom: 1px; color: #333; padding-top: 2px; }
.group { display: flex; flex-direction: column; border-right: 1px solid #ddd; height: 91px; }
.content { display: flex; height: 71px; flex: none; }
.caption-row { text-align: center; line-height: 26px; }
.big { text-align: center; white-space: nowrap; padding-top: 7px; display: block; }
.big svg { margin: 0 auto 5px; }
.general { width: 311px; }
.general .content { padding-left: 13px; }
.b1 { width: 56px; } .b2 { width: 46px; } .b3 { width: 40px; } .b4 { width: 82px; } .b5 { width: 58px; }
.view { width: 157px; }
.fit { width: 56px; padding-left: 4px; }
.sep { width: 1px; height: 56px; background: #ddd; margin-top: 8px; }
.rows { display: flex; flex-direction: column; padding-top: 2px; flex: none; }
.rows > * { height: 23px; white-space: nowrap; flex: none; }
.vlist { padding-left: 6px; }
.vlist svg { margin-right: 2px; }
.settings { width: 438px; }
.s1 { width: 151px; padding-left: 14px; }
.s1 input, .s2 input[type="checkbox"], .k1 input[type="checkbox"] { margin-right: 7px; }
.swatch { width: 16px; height: 12px; border: 2px solid #111; border-width: 2px 2px 1px 1px; margin-right: 3px; }
.drop { border: 3px solid transparent; border-top-color: #333; border-bottom: 0; margin-left: 5px; }
.s2 { width: 130px; padding-left: 6px; }
.mesh { margin-right: 4px; }
.field { display: flex; align-items: center; justify-content: space-between; }
.field.off { padding-left: 20px; }
.off { color: #888; }
.spin { height: 23px; border: 1px solid #999; background: #fff; display: flex; align-items: center; padding: 0 5px 0 2px; margin: 0; }
.spin input { border: 0; background: none; padding: 0; flex: 1; min-width: 0; width: 0; font: inherit; color: inherit; }
.spin svg { fill: #333; }
.off .spin { background: #e4e4e4; border-color: #bbb; }
.off .spin svg { fill: #7389ab; }
.s2 .spin { width: 59px; } .s2 .field { padding-right: 4px; }
.s3 { flex: 1; padding: 1px 11px 0 26px; }
.s3 .spin { width: 47px; height: 24px; }
.clipping { width: 260px; }
.k1 { width: 158px; padding-left: 14px; }
.k1 .spin { width: 63px; } .k1 .field { padding-right: 3px; }
.axes { padding: 2px 3px 0; }
.axes button { width: 22px; height: 23px; border: 1px solid transparent; }
.axes .on { background: #d8d8d8; border-color: #999; }
.axes text { font: bold 13px "Liberation Sans", sans-serif; fill: #8394ae; }
.flip { flex: 1; margin-right: 8px; }

.work { flex: 1; display: flex; min-height: 0; background: #efefef; }
.rail { width: 73px; border-right: 1px solid #999; display: flex; flex-direction: column; position: relative; flex: none; padding: 8px 0 0 5px; }
.selected { position: relative; width: 67px; height: 65px; border: 2px solid #0a7d0a; margin: 8px 0 0 -3px; }
.selected .comp { padding-left: 3px; }
.plus { position: absolute; right: -2px; width: 17px; height: 17px; background: linear-gradient(#444, #444) center / 13px 3px no-repeat, linear-gradient(#444, #444) center / 3px 13px no-repeat, #d3d3d3; border: 1px solid #555; }
.p1 { top: -10px; } .p2 { bottom: -12px; }
.vol { margin-top: 7px; }
.mark { margin: auto 0 3px -5px; }

.panel, .info { font-family: Roboto, "Noto Sans", sans-serif; }
.panel { width: 280px; flex: none; display: flex; flex-direction: column; background: #fff; color: #000; border-top: 2px solid #efefef; }
.phead { display: flex; align-items: center; height: 25px; padding: 0 12px 0 3px; gap: 12px; }
.phead h2 { flex: 1; }
.ab { font: 10px "Liberation Sans", sans-serif; }
.qm { font: bold 15px "Open Sans", sans-serif; padding-left: 3px; }
select { appearance: none; height: 25px; flex: none; margin: 0 3px; border: 1px solid #aaa; border-radius: 0; padding: 0 3px; font: inherit; color: #000; background: #e1e1e1 url("data:image/svg+xml,%3Csvg xmlns='http://www.w3.org/2000/svg' width='10' height='6'%3E%3Cpath d='M1 1L5 5L9 1' fill='none' stroke='%23555'/%3E%3C/svg%3E") no-repeat right 3px center; }
.treewrap { flex: 1; display: flex; min-height: 0; padding-top: 1px; border-bottom: 1px solid #999; }
.tree { flex: 1; display: flex; flex-direction: column; overflow: hidden; }
.row { display: flex; align-items: center; }
.r0 { height: 32px; flex: none; padding-left: 7px; gap: 5px; }
.chev path { fill: none; stroke: #444; stroke-width: 2; }
.chev.dim path { stroke: #999; }
.r0 input, .imports input, .geo input { margin-right: 6px; }
.l1 { margin-left: 13px; border-left: 1px solid #999; flex: none; }
.rest { flex: 1; }
.r1 { height: 32px; padding-left: 11px; gap: 5px; font: bold 13px/15px "Open Sans", sans-serif; }
.r1 .ic { margin: 0 7px 0 3px; }
.l2 { margin-left: 17px; border-left: 1px solid #999; }
.noline { border-color: transparent; }
.r2 { height: 24px; padding-left: 12px; gap: 4px; }
.r2 .ic { margin: 0 6px 0 2px; }
.blue { color: #00f; } .green { color: #008000; } .red { color: #8b0000; }
.geo { margin-left: 17px; color: #999; }
.geo li { display: flex; height: 18px; align-items: center; }
.imports { height: 32px; }
.tick { width: 10px; height: 1px; background: #999; }
.scroll { width: 16px; background: #f0f0f0; display: flex; flex-direction: column; }
.scroll i { height: 548px; background: #cdcdcd; margin-bottom: auto; flex: 0 1 auto; width: 15px; }
.scroll path { fill: none; stroke: #444; stroke-width: 2; }
.expand { height: 26px; display: flex; align-items: center; padding: 0 0 0 5px; flex: none; white-space: nowrap; }
.expand span { width: 92px; }
.expand button { gap: 6px; width: 47px; }
.expand button:last-child { width: auto; }
.split { width: 3px; background: #c0c0c0; }

.viewport { flex: 1; position: relative; background: #f5f5f4; min-width: 0; }
.scene { position: absolute; inset: 0; width: 100%; height: 100%; }
.scene text { font-family: "Open Sans", sans-serif; }
.scene .face { font-family: "DejaVu Sans", sans-serif; fill: #333; }
.scale { font-size: 12px; }
.collapse { position: absolute; left: 6px; top: 7px; border: 6px solid transparent; border-left: 0; border-right: 9px solid #333; }
.modes { position: relative; display: flex; width: 290px; margin-left: 137px; background: #eaeaea; height: 30px; }
.modes button { padding: 0 5px; gap: 8px; font-size: 13px; border: 1px solid transparent; }
.modes .m1 { width: 97px; padding-left: 4px; }
.modes .m2 { width: 98px; padding: 0 4px; gap: 6px; background: #ffedb3; border-color: #e8c977; }
.modes .m3 { flex: 1; gap: 14px; padding-left: 3px; }

.info { width: 270px; flex: none; display: flex; flex-direction: column; background: #f7f7f7; color: #000; }
.filters { height: 26px; border-bottom: 1px solid #999; display: flex; align-items: center; padding-left: 7px; gap: 4px; color: #999; }
.filters button { gap: 4px; height: 25px; white-space: nowrap; }
.filters .active { background: #c9e2f9; border: 1px solid #8fc4f2; color: #000; padding: 0 8px 0 4px; margin-left: 3px; gap: 5px; }
.filters .warn { margin-right: 4px; }
article h3 { display: flex; align-items: center; height: 28px; padding-left: 7px; font-weight: bold; border-bottom: 1px solid #e8e8e8; }
.hic { margin: 0 33px 0 6px; }
.msg { display: flex; height: 44px; border-bottom: 1px solid #e8e8e8; padding-left: 31px; color: #1d7a46; }
.msg.tall { height: 60px; background: linear-gradient(#999, #999) 13px 0 / 1px 100% no-repeat; }
.msg p { white-space: pre; padding-top: 6px; }
.mic { margin: 8px 14px 0 -1px; }
.tall .mic { margin: 17px 14px 0 -1px; }
.info footer { margin-top: auto; border-top: 1px solid #999; padding: 5px 10px 2px; }
.strip { width: 31px; background: #a9cab8; display: flex; flex-direction: column; align-items: center; padding-top: 5px; color: #000; flex: none; }
.strip svg { margin-top: 17px; }
.vert { writing-mode: vertical-rl; transform: rotate(180deg); margin-top: 9px; font-family: "Open Sans", sans-serif; }
.strip .vert + svg { margin-top: 7px; }
.pdf { font: bold 9px "Liberation Sans", sans-serif; fill: #666; }
</style>
